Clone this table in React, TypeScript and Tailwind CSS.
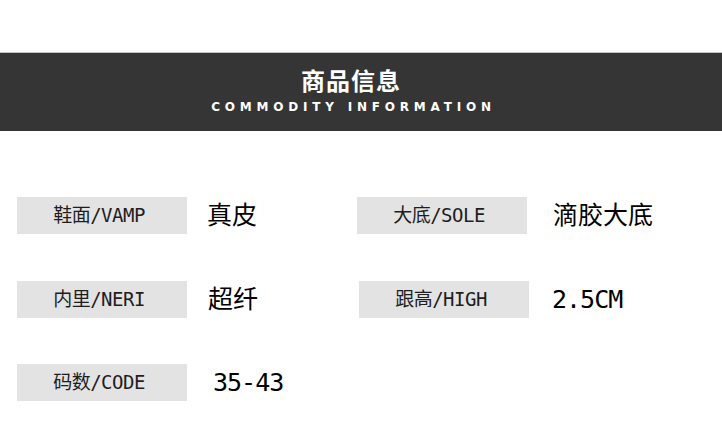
import React from "react";

const monoFont = { fontFamily: '"DejaVu Sans Mono", "Noto Sans CJK SC", monospace' };

function Label({ text, className = "" }: { text: string; className?: string }) {
  return (
    <div
      className={`flex h-[37px] w-[170px] shrink-0 items-center justify-center bg-[#e3e3e3] text-[19px] text-[#1e1e1e] ${className}`}
      style={monoFont}
    >
      <span className="pr-[6px] tracking-[-0.5px]">{text}</span>
    </div>
  );
}

function Value({ text, className = "" }: { text: string; className?: string }) {
  return (
    <div className={`text-[25px] leading-none text-black ${className}`} style={monoFont}>
      {text}
    </div>
  );
}

export default function App() {
  return (
    <div className="h-[440px] w-[722px] overflow-hidden bg-white">
      <div className="h-[52px]" />
      <div className="flex h-[79px] flex-col items-center border-t border-[#c4c4c4] bg-[#353535] pr-[20px]">
        <div
          className="mt-[12px] text-[24px] font-bold leading-[30px] tracking-[1px] text-white"
          style={{ fontFamily: '"Noto Sans CJK SC", sans-serif' }}
        >
          商品信息
        </div>
        <div
          className="mt-[5px] pl-[5px] text-[12px] font-bold leading-[14px] tracking-[4.8px] text-white"
          style={{ fontFamily: '"DejaVu Sans", sans-serif' }}
        >
          COMMODITY INFORMATION
        </div>
      </div>

      <div className="mt-[66px] flex pl-[17px]">
        <div className="flex w-[340px] items-center">
          <Label text="鞋面/VAMP" />
          <Value text="真皮" className="ml-[20px]" />
        </div>
        <div className="flex items-center">
          <Label text="大底/SOLE" />
          <Value text="滴胶大底" className="ml-[26px]" />
        </div>
      </div>

      <div className="mt-[47px] flex pl-[17px]">
        <div className="flex w-[340px] items-center">
          <Label text="内里/NERI" />
          <Value text="超纤" className="ml-[21px]" />
        </div>
        <div className="flex items-center">
          <Label text="跟高/HIGH" className="ml-[2px] -mt-[1px]" />
          <Value text="2.5CM" className="ml-[23px] tracking-[-1px]" />
        </div>
      </div>

      <div className="mt-[46px] flex pl-[17px]">
        <div className="flex w-[340px] items-center">
          <Label text="码数/CODE" />
          <Value text="35-43" className="ml-[26px] tracking-[-1px]" />
        </div>
      </div>
    </div>
  );
}
